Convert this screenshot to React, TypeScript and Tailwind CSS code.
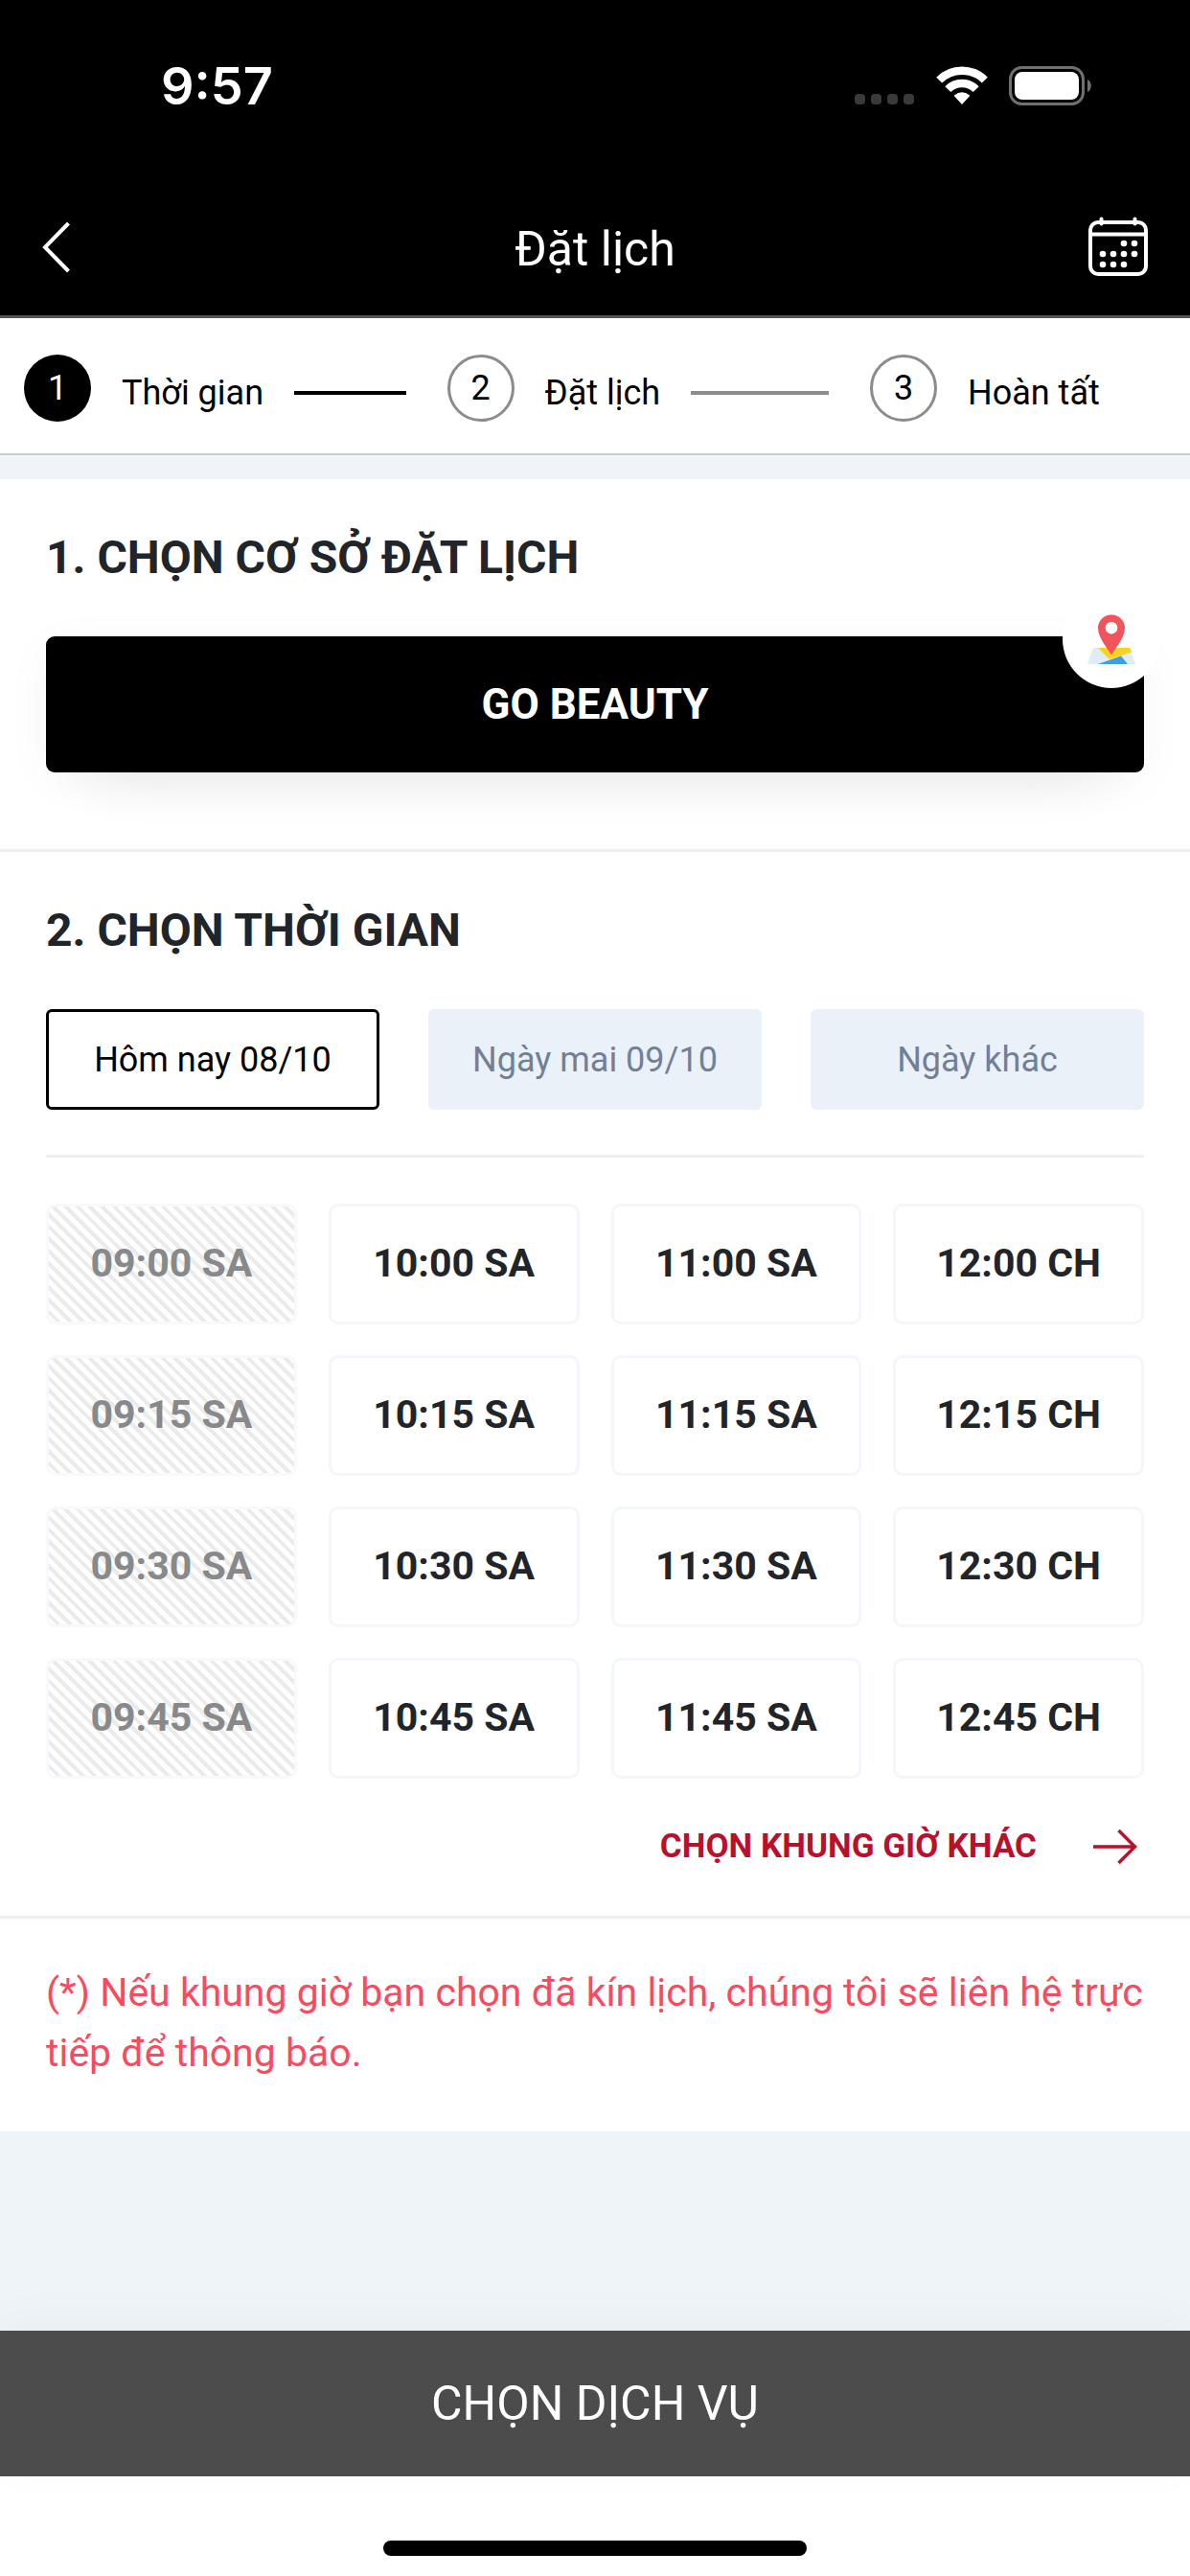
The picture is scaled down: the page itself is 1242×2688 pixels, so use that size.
import { useState } from "react";

const STEPS = ["Thời gian", "Đặt lịch", "Hoàn tất"];
const DAYS = ["Hôm nay 08/10", "Ngày mai 09/10", "Ngày khác"];
const MINUTES = ["00", "15", "30", "45"];
const HOURS = [
  { hour: "09", period: "SA", past: true },
  { hour: "10", period: "SA", past: false },
  { hour: "11", period: "SA", past: false },
  { hour: "12", period: "CH", past: false },
];

function StatusBar() {
  return (
    <div className="flex h-[172px] items-start justify-between pt-[56px] pr-[103px] pl-[168px]">
      <span className="font-['Inter',sans-serif] text-[54px] leading-[68px] font-semibold">9:57</span>
      <div className="flex pt-[13px]">
        <svg className="h-[42px] w-[62px]" viewBox="0 0 62 42" fill="#3a3a3a" aria-hidden="true">
          <rect x="0" y="29" width="11" height="11" rx="4" />
          <rect x="17" y="29" width="11" height="11" rx="4" />
          <rect x="34" y="29" width="11" height="11" rx="4" />
          <rect x="51" y="29" width="11" height="11" rx="4" />
        </svg>
        <svg className="ml-[23px] h-[42px] w-[54px]" viewBox="0 0 54 42" aria-hidden="true">
          <g fill="none" stroke="#fff" strokeWidth="8.4">
            <path d="M3.2 14.6a33.5 33.5 0 0 1 47.6 0" />
            <path d="M12.3 24.1a20.8 20.8 0 0 1 29.4 0" />
          </g>
          <path d="M27 40l-7.6-8.2c-.6-.7-.5-1.4.2-1.9a12 12 0 0 1 14.8 0c.7.5.8 1.2.2 1.9z" fill="#fff" />
        </svg>
        <svg className="ml-[22px] h-[42px] w-[86px]" viewBox="0 0 86 42" aria-hidden="true">
          <rect x="1.5" y="1.5" width="76" height="38" rx="12" fill="none" stroke="#707070" strokeWidth="3" />
          <rect x="6" y="6" width="67" height="29" rx="8" fill="#fff" />
          <path d="M82 14c5 2 5 11 0 13z" fill="#707070" />
        </svg>
      </div>
    </div>
  );
}

function CalendarIcon() {
  return (
    <svg className="h-[64px] w-[64px]" viewBox="0 0 64 64" aria-hidden="true">
      <g fill="none" stroke="#fff" strokeWidth="4" strokeLinecap="round">
        <rect x="3" y="6" width="58" height="54" rx="8" />
        <path d="M3 18.500H61M14.500 2.500v5M49.500 2.500v5" />
      </g>
      <g fill="#fff">
        <circle cx="38" cy="28" r="3.300" />
        <circle cx="49" cy="28" r="3.300" />
        <circle cx="16" cy="39" r="3.300" />
        <circle cx="27" cy="39" r="3.300" />
        <circle cx="38" cy="39" r="3.300" />
        <circle cx="49" cy="39" r="3.300" />
        <circle cx="16" cy="50" r="3.300" />
        <circle cx="27" cy="50" r="3.300" />
        <circle cx="38" cy="50" r="3.300" />
      </g>
    </svg>
  );
}

function MapPinIcon() {
  return (
    <svg className="h-[52px] w-[52px]" viewBox="0 0 52 52" aria-hidden="true">
      <path d="M7 35H45L51 52H1z" fill="#dfecf3" />
      <path d="M12 35H45.500L47 39.500 24 47z" fill="#f3d41f" />
      <path d="M12 52L36 43.500 43 52z" fill="#3f9de0" />
      <path
        fillRule="evenodd"
        d="M26 42.500C21 34 12 24 12 14.500a14 14 0 0 1 28 0C40 24 31 34 26 42.500zM26 8a6.200 6.200 0 1 0 0 12.400A6.200 6.200 0 0 0 26 8z"
        fill="#f2545b"
      />
      <circle cx="26" cy="14.200" r="6.200" fill="#fff" />
    </svg>
  );
}

function Steps() {
  return (
    <ol className="flex h-[143px] items-start border-b-2 border-[#c9cbcd] bg-white pt-[38px] pl-[25px] text-[36px] leading-[60px] text-black">
      {STEPS.map((label, i) => {
        const last = i === STEPS.length - 1;
        return (
          <li key={label} className={last ? "flex w-[334px] items-center" : "flex flex-1 items-center"}>
            <span
              className={
                i === 0
                  ? "flex size-[70px] items-center justify-center rounded-full bg-black text-white"
                  : "flex size-[70px] items-center justify-center rounded-full border-3 border-[#8b8b90]"
              }
            >
              {i + 1}
            </span>
            <span className="flex flex-1 items-center pt-[10px] pl-[32px] whitespace-nowrap">
              {label}
              {!last && (
                <span
                  className={
                    i === 0 ? "mr-[43px] ml-[32px] h-[4px] flex-1 bg-black" : "mr-[43px] ml-[32px] h-[4px] flex-1 bg-[#8b8b90]"
                  }
                />
              )}
            </span>
          </li>
        );
      })}
    </ol>
  );
}

export default function App() {
  const [day, setDay] = useState(0);
  const [slot, setSlot] = useState("");

  return (
    <div className="flex min-h-screen flex-col bg-[#eff4f8] font-['Roboto',sans-serif] text-[#212529]">
      <header className="border-b-3 border-[#555] bg-black text-white">
        <StatusBar />
        <div className="flex h-[157px] items-start justify-between pt-[54px] pr-[43px] pl-[43px]">
          <button type="button" aria-label="Quay lại" className="flex h-[64px] w-[64px] items-center">
            <svg className="h-[54px] w-[32px]" viewBox="0 0 32 54" fill="none" stroke="#fff" strokeWidth="4" aria-hidden="true">
              <path d="M28.500 2L4 27l24.500 25" />
            </svg>
          </button>
          <h1 className="text-[50px] leading-[68px]">Đặt lịch</h1>
          <button type="button" aria-label="Lịch hẹn">
            <CalendarIcon />
          </button>
        </div>
      </header>

      <Steps />

      <main className="mt-[25px] bg-white">
        <section className="border-b-3 border-[#eeefef] px-[48px] pt-[54px] pb-[80px]">
          <h2 className="text-[48px] leading-[56px] font-bold">1. CHỌN CƠ SỞ ĐẶT LỊCH</h2>
          <div className="relative mt-[54px]">
            <button
              type="button"
              className="h-[142px] w-full rounded-[9px] bg-black text-[44px] font-bold text-white shadow-[0_50px_60px_-50px_rgba(50,50,93,0.12),0_10px_50px_rgba(0,0,0,0.04)]"
            >
              GO BEAUTY
            </button>
            <button
              type="button"
              aria-label="Xem bản đồ"
              className="absolute top-[-48px] right-[-17px] flex size-[102px] items-center justify-center rounded-full bg-white"
            >
              <MapPinIcon />
            </button>
          </div>
        </section>

        <section className="border-b-3 border-[#eeefef] px-[48px] pt-[54px] pb-[48px]">
          <h2 className="text-[48px] leading-[56px] font-bold">2. CHỌN THỜI GIAN</h2>
          <div className="mt-[54px] grid grid-cols-3 gap-[51px] text-[36px]">
            {DAYS.map((label, i) => (
              <button
                key={label}
                type="button"
                aria-pressed={day === i}
                onClick={() => setDay(i)}
                className={
                  day === i
                    ? "h-[105px] rounded-[6px] border-3 border-black bg-white whitespace-nowrap text-black"
                    : "h-[105px] rounded-[6px] bg-[#ebf1f9] whitespace-nowrap text-[#718096]"
                }
              >
                {label}
              </button>
            ))}
          </div>
          <hr className="mt-[47px] mb-[48px] border-t-3 border-[#eeefef]" />
          <div className="grid grid-cols-4 gap-x-[33px] gap-y-[32px] text-[41px] font-bold">
            {MINUTES.flatMap((minute) =>
              HOURS.map(({ hour, period, past }) => {
                const time = `${hour}:${minute} ${period}`;
                return (
                  <button
                    key={time}
                    type="button"
                    disabled={past}
                    aria-pressed={slot === time}
                    onClick={() => setSlot(time)}
                    className={
                      past
                        ? "h-[126px] rounded-[10px] border-3 border-[#f7f9fc] bg-[repeating-linear-gradient(45deg,#ffffff_0px,#ffffff_5px,#ebebeb_5px,#ebebeb_9px)] text-[#87898b]"
                        : "h-[126px] rounded-[10px] border-3 border-[#f3f6fa] bg-white"
                    }
                  >
                    {time}
                  </button>
                );
              })
            )}
          </div>
          <div className="mt-[47px] flex justify-end">
            <button type="button" className="flex items-center text-[35px] leading-[48px] font-bold text-[#b9112b]">
              CHỌN KHUNG GIỜ KHÁC
              <svg className="mr-[7px] ml-[58px] h-[40px] w-[47px]" viewBox="0 0 47 40" fill="none" stroke="currentColor" strokeWidth="3.500" aria-hidden="true">
                <path d="M1 20H44M27.500 3L44.500 20 27.500 37" />
              </svg>
            </button>
          </div>
        </section>

        <p className="px-[48px] pt-[46px] pb-[50px] text-[41px] leading-[63px] text-[#f94b5f]">
          (*) Nếu khung giờ bạn chọn đã kín lịch, chúng tôi sẽ liên hệ trực tiếp để thông báo.
        </p>
      </main>

      <footer className="mt-auto bg-white">
        <button type="button" className="h-[152px] w-full bg-[#4c4c4c] text-[50px] text-white shadow-[0_-10px_50px_rgba(0,0,0,0.03)]">
          CHỌN DỊCH VỤ
        </button>
        <div className="flex h-[104px] items-end justify-center pb-[21px]">
          <span className="h-[16px] w-[442px] rounded-full bg-black" />
        </div>
      </footer>
    </div>
  );
}
